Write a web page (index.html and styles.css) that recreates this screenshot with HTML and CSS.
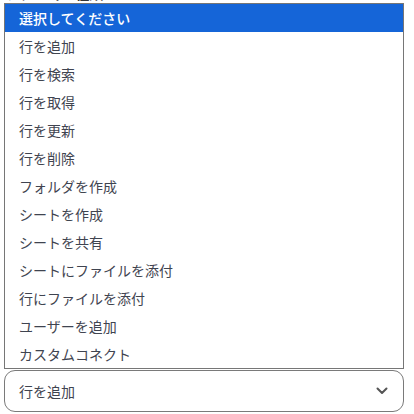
FILE: index.html
```html
<!DOCTYPE html>
<html lang="ja">
<head>
<meta charset="utf-8">
<link rel="stylesheet" href="styles.css">
</head>
<body>
<div class="page">
  <div class="label">アクション種類</div>
  <div class="field">
    <div class="select">
      <span class="value">行を追加</span>
      <svg class="chevron" width="12" height="8" viewBox="0 0 12 8"><path d="M1.5 1.5 L6 6 L10.5 1.5" fill="none" stroke="#555" stroke-width="2" stroke-linecap="round" stroke-linejoin="round"/></svg>
    </div>
  </div>
  <ul class="listbox">
    <li class="opt active">選択してください</li>
    <li class="opt">行を追加</li>
    <li class="opt">行を検索</li>
    <li class="opt">行を取得</li>
    <li class="opt">行を更新</li>
    <li class="opt">行を削除</li>
    <li class="opt">フォルダを作成</li>
    <li class="opt">シートを作成</li>
    <li class="opt">シートを共有</li>
    <li class="opt">シートにファイルを添付</li>
    <li class="opt">行にファイルを添付</li>
    <li class="opt">ユーザーを追加</li>
    <li class="opt">カスタムコネクト</li>
  </ul>
</div>
</body>
</html>
```

FILE: styles.css
```css
html, body {
  margin: 0;
  padding: 0;
  background: #ffffff;
}
body {
  font-family: "Noto Sans CJK JP", "Noto Sans", sans-serif;
  color: #3f4450;
}
.page {
  position: relative;
  width: 414px;
  height: 414px;
  overflow: hidden;
}
.label {
  font-size: 14px;
  font-weight: 700;
  color: #333;
  line-height: 20px;
  height: 20px;
  padding-left: 6px;
  margin-top: -17px;
}
.field {
  padding: 367px 10px 0 4px;
}
.select {
  box-sizing: border-box;
  width: 400px;
  height: 42px;
  border: 1px solid #7a7a7a;
  border-radius: 11px;
  display: flex;
  align-items: center;
  justify-content: space-between;
  padding: 0 15px 0 14px;
  font-size: 14px;
  color: #3f4450;
}
.chevron {
  display: block;
}
.listbox {
  position: absolute;
  top: 3px;
  left: 4px;
  box-sizing: border-box;
  width: 400px;
  height: 366px;
  margin: 0;
  padding: 0;
  list-style: none;
  background: #fff;
  border: 1px solid #767676;
}
.opt {
  height: 28px;
  line-height: 28px;
  padding-left: 14px;
  font-size: 14px;
  color: #3f4450;
  white-space: nowrap;
}
.opt.active {
  background: #1565d8;
  color: #fff;
  font-weight: 500;
}
```
